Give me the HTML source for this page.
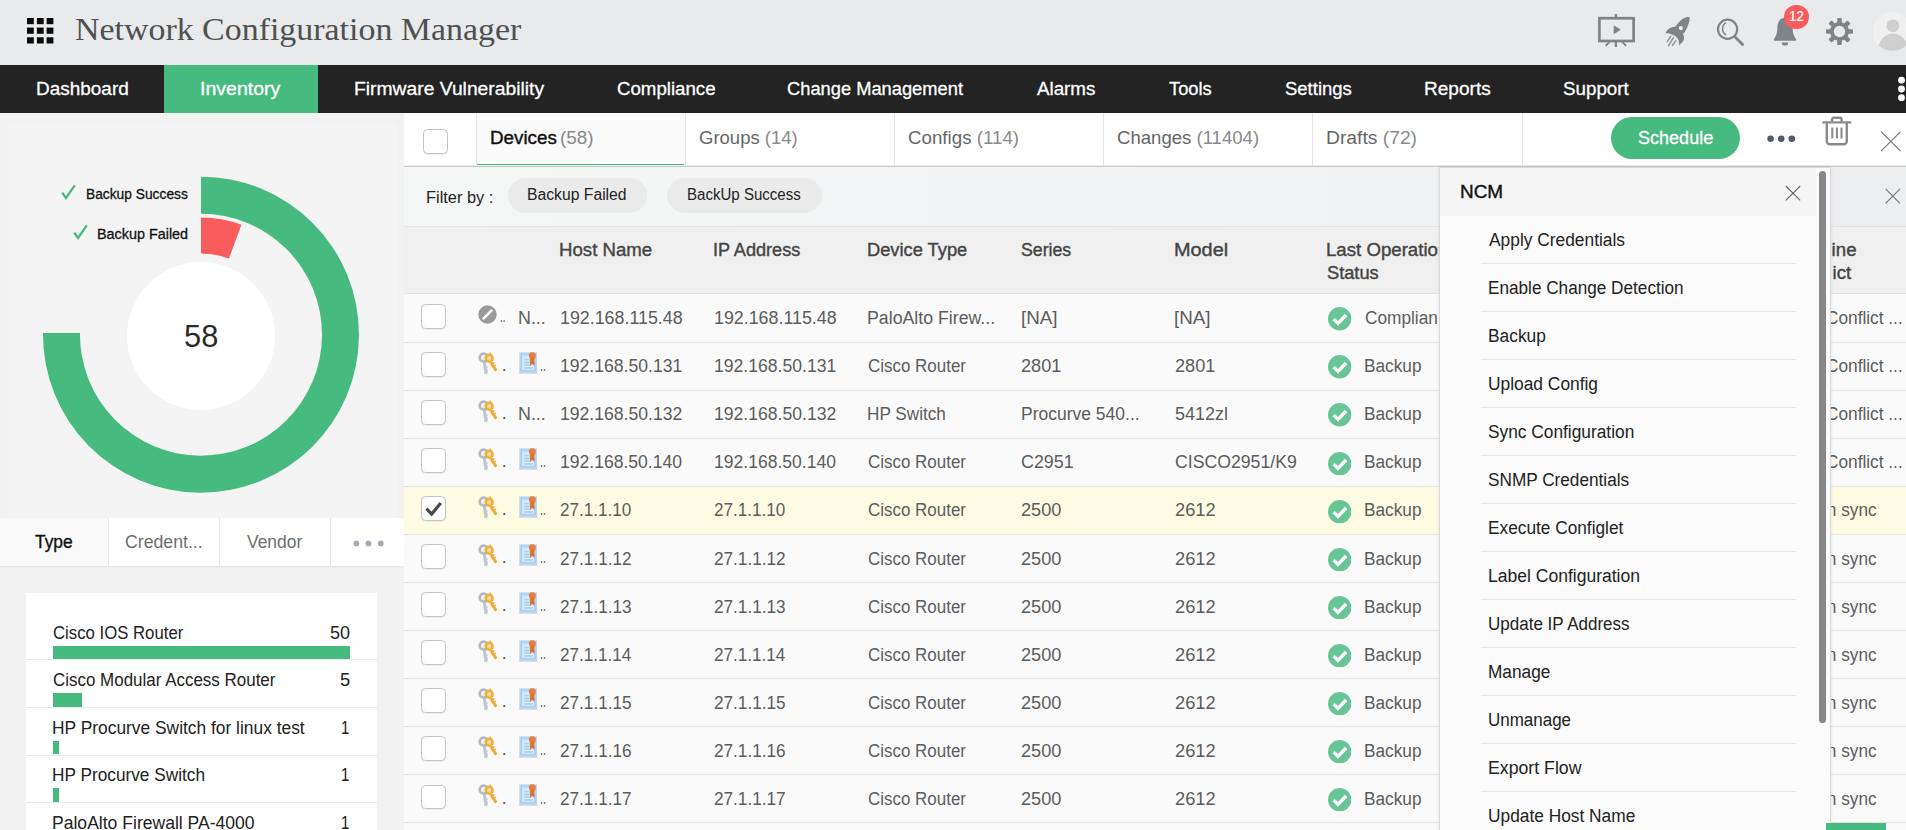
<!DOCTYPE html>
<html lang="en"><head><meta charset="utf-8"><title>Network Configuration Manager</title>
<style>
html,body{margin:0;padding:0}
body{width:1906px;height:830px;overflow:hidden;position:relative;background:#f2f2f2;font-family:"Liberation Sans",sans-serif}
.b{position:absolute;display:block}
.t{position:absolute;white-space:nowrap;line-height:1;transform-origin:0 0;display:block}
.row{position:absolute;left:404px;width:1502px;border-bottom:1px solid #e2e2e2}
.cb{position:absolute;width:22.8px;height:22.8px;border:1px solid #c4c4c4;border-radius:4.5px;background:#fff;box-shadow:0 1px 0 rgba(0,0,0,.06)}
.cb svg{position:absolute;left:-1px;top:-1px}
#pop{position:absolute;left:1439px;top:167px;width:392px;height:670px;background:#fbfbfb;border:1px solid #d9d9d9;box-shadow:0 0 3px rgba(0,0,0,.1);box-sizing:border-box;z-index:5}
#popin{position:absolute;left:-1440px;top:-168px;width:1906px;height:830px}
</style></head><body>
<svg width="0" height="0" style="position:absolute">
<defs>
<g id="iok"><circle cx="12" cy="12" r="12" fill="#68c696"/><path d="M5.8 12.4l4.4 4.4L18.6 8.2" fill="none" stroke="#fff" stroke-width="3.5"/></g>
<g id="ikey">
 <path d="M7.4 10.2L9.2 21.8" stroke="#c3c6ca" stroke-width="3.3" fill="none"/>
 <path d="M8.6 15.5h2.2M8.9 18.5h2" stroke="#c3c6ca" stroke-width="1.4"/>
 <circle cx="6.7" cy="5.5" r="4" fill="#eef0f2" stroke="#b3b7bc" stroke-width="2.5"/>
 <path d="M13.7 10.3L19.3 18.6" stroke="#efaa3a" stroke-width="3.1" fill="none"/>
 <path d="M16 11.6l1.6-1M17.6 14l1.5-1" stroke="#efaa3a" stroke-width="1.3"/>
 <circle cx="12.2" cy="6.3" r="3.4" fill="#fbe59a" stroke="#f0ae3e" stroke-width="2.6"/>
 <path d="M13 .6l1 2.4" stroke="#f0ae3e" stroke-width="1.6"/>
</g>
<g id="icert">
 <path d="M0 22l1.6-1.2h17l1.6 1.2z" fill="#dcdfe3"/>
 <rect x="1.3" y=".4" width="17.7" height="20.6" fill="#b7d6f3"/>
 <rect x="3.5" y="3" width="13.3" height="15.6" fill="#d3e8fa" stroke="#a2c6ea" stroke-width=".8"/>
 <path d="M6.4 7.8h5.4M6.4 10.4h5.4M6.4 13h5.4M6 16h9" stroke="#9dbfe2" stroke-width="1"/>
 <circle cx="14.3" cy="3.7" r="3.4" fill="#e8793a"/>
 <path d="M12.3 6.2l-.4 7.8 2.4-2.2 2.4 2.2-.4-7.8z" fill="#e16f2c"/>
</g>
</defs></svg>

<!-- ===== header ===== -->
<div class="b" style="left:0;top:0;width:1906px;height:65px;background:#e9eaeb"></div>
<svg class="b" style="left:26.6px;top:18px" width="27" height="26" viewBox="0 0 27 26" fill="#0a0a0a">
<rect x="0" y="0" width="6.8" height="6.2"/><rect x="9.9" y="0" width="6.8" height="6.2"/><rect x="19.6" y="0" width="6.8" height="6.2"/>
<rect x="0" y="9.6" width="6.8" height="6.2"/><rect x="9.9" y="9.6" width="6.8" height="6.2"/><rect x="19.6" y="9.6" width="6.8" height="6.2"/>
<rect x="0" y="19.3" width="6.8" height="6.2"/><rect x="9.9" y="19.3" width="6.8" height="6.2"/><rect x="19.6" y="19.3" width="6.8" height="6.2"/>
</svg>
<!-- presentation -->
<svg class="b" style="left:1596px;top:12px" width="42" height="38" viewBox="0 0 42 38">
<g fill="none" stroke="#7f8488" stroke-width="2.7"><rect x="3.4" y="6.2" width="34.2" height="22.8"/><path d="M19.9 2v4M19.9 29.4v5.6" stroke-width="2.3"/><path d="M13.4 29.8l-3.6 4M26.4 29.8l3.6 4" stroke-width="1.9"/></g>
<path d="M17.7 13.2v9l7.2-4.5z" fill="#7f8488"/>
</svg>
<!-- rocket -->
<svg class="b" style="left:1663px;top:15px" width="30" height="33" viewBox="0 0 30 33">
<path d="M26.4 2.05C26.8 4.5 26.4 6.5 25.8 8.1 25 10.8 24 13.2 22.8 15.3 22 16.6 21.1 17.8 20.07 18.9 20.9 20.5 21.2 22.1 20.98 23.7 20.7 25 20.1 26.2 19.2 27.3 18.3 28.4 17.3 29.4 16.2 30.4 16.2 28.7 16 27.1 15.55 25.5 15.2 24.4 14.6 23.4 13.7 22.5 12.6 21.5 11.4 20.7 10.1 20.1 8.6 19.4 7 18.8 5.3 18.3L2.3 18.3C2.9 17 3.7 15.8 4.7 14.7 5.7 13.7 6.9 13 8.3 12.6 9.7 12.2 11.1 11.9 12.5 11.7 13.3 10.2 14.3 8.8 15.55 7.5 16.8 6.2 18.2 5 19.8 3.86 20.9 3.2 22.1 2.7 23.4 2.35 24.4 2.1 25.4 2 26.4 2.05Z" fill="#7f8488"/>
<circle cx="17.8" cy="13.1" r="2.1" fill="#eeeff0"/>
<g stroke="#7f8488" stroke-width="1.5" stroke-linecap="round" opacity=".85"><path d="M7.7 21.4L4.3 26.6M10.3 22.8L5.6 30.6M12.8 25.6L9.6 30.2"/></g>
</svg>
<!-- search -->
<svg class="b" style="left:1714px;top:15px" width="34" height="34" viewBox="0 0 34 34" fill="none" stroke="#7f8488">
<circle cx="13.6" cy="14.2" r="9.6" stroke-width="2.2"/><path d="M12 7.6c-4.6 2.6-4.6 9.8 0 12.4" stroke-width="1.5"/><path d="M20.6 21.4l8 8" stroke-width="2.8" stroke-linecap="round"/>
</svg>
<!-- bell -->
<svg class="b" style="left:1772px;top:14px" width="28" height="34" viewBox="0 0 28 34" fill="#7f8488">
<path d="M13 3.5c-5 .6-7.6 4.4-7.6 9.6 0 6-1.4 9.4-3.4 12v1.7h22V25.1c-2-2.6-3.4-6-3.4-12 0-5.2-2.6-9-7.6-9.6z"/><path d="M9.8 28.4h6.4a3.2 3.2 0 0 1-6.4 0z"/>
</svg>
<div class="b" style="left:1784.1px;top:4.6px;width:24.6px;height:24.6px;border-radius:50%;background:#f85c5c"></div>
<!-- gear -->
<svg class="b" style="left:1825px;top:17px" width="29" height="29" viewBox="-14.5 -14.5 29 29">
<g fill="#7f8488"><circle r="9.5"/>
<g id="tooth"><rect x="-2.3" y="-13.5" width="4.6" height="27" rx="1.1"/></g>
<use href="#tooth" transform="rotate(45)"/><use href="#tooth" transform="rotate(90)"/><use href="#tooth" transform="rotate(135)"/></g>
<circle r="5.7" fill="#e9eaeb"/>
</svg>
<!-- avatar -->
<svg class="b" style="left:1872.5px;top:11.5px" width="34" height="39" viewBox="0 0 34 39"><defs><clipPath id="av"><circle cx="19.5" cy="19.5" r="19.5"/></clipPath></defs>
<circle cx="19.5" cy="19.5" r="19.5" fill="#f0f0f0"/><g clip-path="url(#av)" fill="#cfcfcf"><circle cx="19.9" cy="13.8" r="6.4"/><ellipse cx="20" cy="37.4" rx="14.5" ry="16"/></g></svg>

<!-- ===== nav ===== -->
<div class="b" style="left:0;top:65px;width:1906px;height:48px;background:#232323"></div>
<div class="b" style="left:164px;top:65px;width:154px;height:48px;background:#47ba7f"></div>
<svg class="b" style="left:1896px;top:75px" width="10" height="28" viewBox="0 0 10 28" fill="#fff"><circle cx="5.5" cy="5.2" r="3.4"/><circle cx="5.5" cy="14" r="3.4"/><circle cx="5.5" cy="22.7" r="3.4"/></svg>

<!-- ===== left panel ===== -->
<div class="b" style="left:9px;top:123px;width:389px;height:395px;background:#f4f4f4"></div>
<svg class="b" style="left:0;top:160px" width="404" height="350" viewBox="0 160 404 350">
<path d="M201 176.7A158 158 0 1 1 43.01 333.1H80.01A121 121 0 1 0 201 213.7Z" fill="#47ba7f"/>
<path d="M201 217.5A117.2 117.2 0 0 1 241.4 224.7L229 258.4A81.2 81.2 0 0 0 201 253.5Z" fill="#f85c5c"/>
<circle cx="201" cy="336" r="74" fill="#fff"/>
<g fill="none" stroke="#47ba7f" stroke-width="2.3"><path d="M62.2 192.6l3.8 5.4 8.8-12.6"/><path d="M74.2 232.6l3.8 5.4 8.8-12.6"/></g>
</svg>
<div class="b" style="left:0;top:518px;width:404px;height:48px;background:#fff;box-shadow:0 1px 2px rgba(0,0,0,.08)"></div>
<div class="b" style="left:0;top:518px;width:108px;height:48px;background:#f9f9f9"></div>
<div class="b" style="left:108px;top:518px;width:1px;height:48px;background:#e6e6e6"></div>
<div class="b" style="left:219px;top:518px;width:1px;height:48px;background:#e6e6e6"></div>
<div class="b" style="left:330px;top:518px;width:1px;height:48px;background:#e6e6e6"></div>
<svg class="b" style="left:350px;top:538px" width="36" height="12" viewBox="0 0 36 12" fill="#a4abb3"><circle cx="6.3" cy="5.4" r="2.9"/><circle cx="18.4" cy="5.4" r="2.9"/><circle cx="30.8" cy="5.4" r="2.9"/></svg>
<div class="b" style="left:26px;top:593px;width:351px;height:240px;background:#fff"></div>
<div class="b" style="left:53.3px;top:646.4px;width:296.6px;height:12.6px;background:#47ba7f"></div>
<div class="b" style="left:26px;top:659px;width:351px;height:1.3px;background:#e9e9e9"></div>
<div class="b" style="left:53.3px;top:693.4px;width:28.6px;height:13.2px;background:#47ba7f"></div>
<div class="b" style="left:26px;top:707px;width:351px;height:1.3px;background:#e9e9e9"></div>
<div class="b" style="left:53.3px;top:741px;width:5.8px;height:13.2px;background:#47ba7f"></div>
<div class="b" style="left:26px;top:755px;width:351px;height:1.3px;background:#e9e9e9"></div>
<div class="b" style="left:53.3px;top:788.2px;width:5.8px;height:13.4px;background:#47ba7f"></div>
<div class="b" style="left:26px;top:802px;width:351px;height:1.3px;background:#e9e9e9"></div>

<!-- ===== main: tab bar ===== -->
<div class="b" style="left:404px;top:113px;width:1502px;height:717px;background:#fafafa"></div>
<div class="b" style="left:404px;top:113px;width:1502px;height:52.5px;background:#fff"></div>
<div class="b" style="left:476px;top:113px;width:209px;height:52px;background:#fafafa"></div>
<div class="b" style="left:404px;top:165px;width:1502px;height:1px;background:#ececec"></div><div class="b" style="left:404px;top:166px;width:1502px;height:1px;background:#c9c9c9"></div>
<div class="b" style="left:477px;top:163.6px;width:207px;height:1.6px;background:#47ba7f"></div>
<div class="b" style="left:475.5px;top:113px;width:1px;height:52px;background:#e4e4e4"></div>
<div class="b" style="left:685px;top:113px;width:1px;height:52px;background:#e4e4e4"></div>
<div class="b" style="left:894px;top:113px;width:1px;height:52px;background:#e4e4e4"></div>
<div class="b" style="left:1103px;top:113px;width:1px;height:52px;background:#e4e4e4"></div>
<div class="b" style="left:1312px;top:113px;width:1px;height:52px;background:#e4e4e4"></div>
<div class="b" style="left:1522px;top:113px;width:1px;height:52px;background:#e4e4e4"></div>
<div class="cb" style="left:423.1px;top:128.9px"></div>
<div class="b" style="left:1611.2px;top:117px;width:128.4px;height:41.6px;border-radius:21px;background:#47ba7f"></div>
<svg class="b" style="left:1765px;top:133px" width="34" height="12" viewBox="0 0 34 12" fill="#4f5b6b"><circle cx="5.6" cy="5.8" r="3.3"/><circle cx="16.2" cy="5.8" r="3.3"/><circle cx="26.8" cy="5.8" r="3.3"/></svg>
<!-- trash -->
<svg class="b" style="left:1821px;top:115px" width="32" height="32" viewBox="0 0 32 32" fill="none" stroke="#8c8c8c" stroke-width="2.4">
<path d="M2.4 7.4h26.8" stroke-linecap="round"/><path d="M11 7V4.6c0-1 .8-1.8 1.8-1.8h6c1 0 1.8.8 1.8 1.8V7"/><path d="M5.8 7.6v18.6a3 3 0 0 0 3 3h14a3 3 0 0 0 3-3V7.6"/><path d="M11.3 12.6v11M15.9 12.6v11M20.5 12.6v11" stroke-width="2.1"/>
</svg>
<svg class="b" style="left:1879px;top:130px" width="24" height="24" viewBox="0 0 24 24" stroke="#777" stroke-width="1.2"><path d="M2 1.6l19.6 19.6M21.6 1.6L2 21.2"/></svg>

<!-- ===== filter bar ===== -->
<div class="b" style="left:404px;top:167px;width:1502px;height:59px;background:linear-gradient(90deg,#f5f6f6 0%,#f3f4f5 45%,#edeef0 100%)"></div>
<div class="b" style="left:404px;top:226px;width:1502px;height:1px;background:#e4e4e4"></div>
<div class="b" style="left:508px;top:178.2px;width:138.6px;height:34.6px;border-radius:18px;background:#ebebeb"></div>
<div class="b" style="left:667px;top:178.2px;width:154.8px;height:34.6px;border-radius:18px;background:#ebebeb"></div>
<svg class="b" style="left:1884px;top:187px" width="18" height="18" viewBox="0 0 18 18" stroke="#777" stroke-width="1.1"><path d="M1.6 1.8l14.4 14.6M16 1.8L1.6 16.4"/></svg>

<!-- ===== table header ===== -->
<div class="b" style="left:404px;top:227px;width:1502px;height:66px;background:#f0f0f0"></div>
<div class="b" style="left:404px;top:293px;width:1502px;height:1px;background:#e2e2e2"></div>
<div class="row" style="top:294px;height:48px;background:#fafafa"></div>
<div class="cb" style="left:420.8px;top:303.8px"></div>
<svg class="b" style="left:478px;top:305.2px" width="19" height="19" viewBox="0 0 19 19"><circle cx="9.5" cy="9.5" r="9.2" fill="#9a9a9a"/><path d="M5.6 13.4L13.4 5.6" stroke="#fff" stroke-width="2.6" stroke-linecap="round"/></svg>
<span class="t" style="left:499.5px;top:307.8px;font-size:17.6px;color:#555;transform:scaleX(.55)">..</span>
<svg class="b" style="left:1327.7px;top:307.3px" width="23.4" height="23.4" viewBox="0 0 24 24"><use href="#iok"/></svg>
<div class="row" style="top:343px;height:47px;background:#fafafa"></div>
<div class="cb" style="left:420.8px;top:351.9px"></div>
<svg class="b" style="left:477px;top:351.8px" width="22" height="24" viewBox="0 0 22 24"><use href="#ikey"/></svg>
<span class="t" style="left:501.8px;top:356.9px;font-size:17.6px;color:#555">.</span>
<svg class="b" style="left:518px;top:351.8px" width="22" height="24" viewBox="0 0 22 24"><use href="#icert"/></svg>
<span class="t" style="left:540px;top:356.9px;font-size:17.6px;color:#555;transform:scaleX(.6)">..</span>
<svg class="b" style="left:1327.7px;top:355.4px" width="23.4" height="23.4" viewBox="0 0 24 24"><use href="#iok"/></svg>
<div class="row" style="top:391px;height:47px;background:#fafafa"></div>
<div class="cb" style="left:420.8px;top:399.9px"></div>
<svg class="b" style="left:477px;top:399.8px" width="22" height="24" viewBox="0 0 22 24"><use href="#ikey"/></svg>
<span class="t" style="left:501.8px;top:404.9px;font-size:17.6px;color:#555">.</span>
<svg class="b" style="left:1327.7px;top:403.4px" width="23.4" height="23.4" viewBox="0 0 24 24"><use href="#iok"/></svg>
<div class="row" style="top:439px;height:47px;background:#fafafa"></div>
<div class="cb" style="left:420.8px;top:448.0px"></div>
<svg class="b" style="left:477px;top:447.9px" width="22" height="24" viewBox="0 0 22 24"><use href="#ikey"/></svg>
<span class="t" style="left:501.8px;top:453.0px;font-size:17.6px;color:#555">.</span>
<svg class="b" style="left:518px;top:447.9px" width="22" height="24" viewBox="0 0 22 24"><use href="#icert"/></svg>
<span class="t" style="left:540px;top:453.0px;font-size:17.6px;color:#555;transform:scaleX(.6)">..</span>
<svg class="b" style="left:1327.7px;top:451.5px" width="23.4" height="23.4" viewBox="0 0 24 24"><use href="#iok"/></svg>
<div class="row" style="top:487px;height:47px;background:#fdfce3"></div>
<div class="cb" style="left:420.8px;top:496.1px"><svg width="25" height="25" viewBox="0 0 25 25"><path d="M5.4 12.6l5.2 5.4L19.8 7" fill="none" stroke="#4a4a4a" stroke-width="3.2"/></svg></div>
<svg class="b" style="left:477px;top:496.0px" width="22" height="24" viewBox="0 0 22 24"><use href="#ikey"/></svg>
<span class="t" style="left:501.8px;top:501.1px;font-size:17.6px;color:#555">.</span>
<svg class="b" style="left:518px;top:496.0px" width="22" height="24" viewBox="0 0 22 24"><use href="#icert"/></svg>
<span class="t" style="left:540px;top:501.1px;font-size:17.6px;color:#555;transform:scaleX(.6)">..</span>
<svg class="b" style="left:1327.7px;top:499.6px" width="23.4" height="23.4" viewBox="0 0 24 24"><use href="#iok"/></svg>
<div class="row" style="top:535px;height:47px;background:#fafafa"></div>
<div class="cb" style="left:420.8px;top:544.2px"></div>
<svg class="b" style="left:477px;top:544.1px" width="22" height="24" viewBox="0 0 22 24"><use href="#ikey"/></svg>
<span class="t" style="left:501.8px;top:549.2px;font-size:17.6px;color:#555">.</span>
<svg class="b" style="left:518px;top:544.1px" width="22" height="24" viewBox="0 0 22 24"><use href="#icert"/></svg>
<span class="t" style="left:540px;top:549.2px;font-size:17.6px;color:#555;transform:scaleX(.6)">..</span>
<svg class="b" style="left:1327.7px;top:547.7px" width="23.4" height="23.4" viewBox="0 0 24 24"><use href="#iok"/></svg>
<div class="row" style="top:583px;height:47px;background:#fafafa"></div>
<div class="cb" style="left:420.8px;top:592.2px"></div>
<svg class="b" style="left:477px;top:592.1px" width="22" height="24" viewBox="0 0 22 24"><use href="#ikey"/></svg>
<span class="t" style="left:501.8px;top:597.2px;font-size:17.6px;color:#555">.</span>
<svg class="b" style="left:518px;top:592.1px" width="22" height="24" viewBox="0 0 22 24"><use href="#icert"/></svg>
<span class="t" style="left:540px;top:597.2px;font-size:17.6px;color:#555;transform:scaleX(.6)">..</span>
<svg class="b" style="left:1327.7px;top:595.7px" width="23.4" height="23.4" viewBox="0 0 24 24"><use href="#iok"/></svg>
<div class="row" style="top:631px;height:47px;background:#fafafa"></div>
<div class="cb" style="left:420.8px;top:640.3px"></div>
<svg class="b" style="left:477px;top:640.2px" width="22" height="24" viewBox="0 0 22 24"><use href="#ikey"/></svg>
<span class="t" style="left:501.8px;top:645.3px;font-size:17.6px;color:#555">.</span>
<svg class="b" style="left:518px;top:640.2px" width="22" height="24" viewBox="0 0 22 24"><use href="#icert"/></svg>
<span class="t" style="left:540px;top:645.3px;font-size:17.6px;color:#555;transform:scaleX(.6)">..</span>
<svg class="b" style="left:1327.7px;top:643.8px" width="23.4" height="23.4" viewBox="0 0 24 24"><use href="#iok"/></svg>
<div class="row" style="top:679px;height:47px;background:#fafafa"></div>
<div class="cb" style="left:420.8px;top:688.4px"></div>
<svg class="b" style="left:477px;top:688.3px" width="22" height="24" viewBox="0 0 22 24"><use href="#ikey"/></svg>
<span class="t" style="left:501.8px;top:693.4px;font-size:17.6px;color:#555">.</span>
<svg class="b" style="left:518px;top:688.3px" width="22" height="24" viewBox="0 0 22 24"><use href="#icert"/></svg>
<span class="t" style="left:540px;top:693.4px;font-size:17.6px;color:#555;transform:scaleX(.6)">..</span>
<svg class="b" style="left:1327.7px;top:691.9px" width="23.4" height="23.4" viewBox="0 0 24 24"><use href="#iok"/></svg>
<div class="row" style="top:727px;height:47px;background:#fafafa"></div>
<div class="cb" style="left:420.8px;top:736.4px"></div>
<svg class="b" style="left:477px;top:736.3px" width="22" height="24" viewBox="0 0 22 24"><use href="#ikey"/></svg>
<span class="t" style="left:501.8px;top:741.4px;font-size:17.6px;color:#555">.</span>
<svg class="b" style="left:518px;top:736.3px" width="22" height="24" viewBox="0 0 22 24"><use href="#icert"/></svg>
<span class="t" style="left:540px;top:741.4px;font-size:17.6px;color:#555;transform:scaleX(.6)">..</span>
<svg class="b" style="left:1327.7px;top:739.9px" width="23.4" height="23.4" viewBox="0 0 24 24"><use href="#iok"/></svg>
<div class="row" style="top:775px;height:47px;background:#fafafa"></div>
<div class="cb" style="left:420.8px;top:784.5px"></div>
<svg class="b" style="left:477px;top:784.4px" width="22" height="24" viewBox="0 0 22 24"><use href="#ikey"/></svg>
<span class="t" style="left:501.8px;top:789.5px;font-size:17.6px;color:#555">.</span>
<svg class="b" style="left:518px;top:784.4px" width="22" height="24" viewBox="0 0 22 24"><use href="#icert"/></svg>
<span class="t" style="left:540px;top:789.5px;font-size:17.6px;color:#555;transform:scaleX(.6)">..</span>
<svg class="b" style="left:1327.7px;top:788.0px" width="23.4" height="23.4" viewBox="0 0 24 24"><use href="#iok"/></svg>
<div class="b" style="left:1826px;top:823px;width:60px;height:10px;background:#47ba7f;z-index:6"></div>

<span class="t" style="left:74.57px;top:14.00px;font-size:31.6px;color:#505050;transform:scaleX(1.0732);font-family:'Liberation Serif',serif;">Network Configuration Manager</span>
<span class="t" style="left:35.62px;top:79.00px;font-size:19.2px;color:#fff;transform:scaleX(0.9885);-webkit-text-stroke:0.3px currentColor;">Dashboard</span>
<span class="t" style="left:200.07px;top:79.00px;font-size:19.2px;color:#fff;transform:scaleX(1.0184);-webkit-text-stroke:0.3px currentColor;">Inventory</span>
<span class="t" style="left:353.59px;top:79.00px;font-size:19.2px;color:#fff;transform:scaleX(1.0053);-webkit-text-stroke:0.3px currentColor;">Firmware Vulnerability</span>
<span class="t" style="left:616.72px;top:79.00px;font-size:19.2px;color:#fff;transform:scaleX(0.9729);-webkit-text-stroke:0.3px currentColor;">Compliance</span>
<span class="t" style="left:787.34px;top:79.00px;font-size:19.2px;color:#fff;transform:scaleX(0.9536);-webkit-text-stroke:0.3px currentColor;">Change Management</span>
<span class="t" style="left:1037.30px;top:79.00px;font-size:19.2px;color:#fff;transform:scaleX(0.9774);-webkit-text-stroke:0.3px currentColor;">Alarms</span>
<span class="t" style="left:1168.71px;top:79.00px;font-size:19.2px;color:#fff;transform:scaleX(0.9540);-webkit-text-stroke:0.3px currentColor;">Tools</span>
<span class="t" style="left:1284.62px;top:79.00px;font-size:19.2px;color:#fff;transform:scaleX(0.9637);-webkit-text-stroke:0.3px currentColor;">Settings</span>
<span class="t" style="left:1423.81px;top:79.00px;font-size:19.2px;color:#fff;transform:scaleX(0.9934);-webkit-text-stroke:0.3px currentColor;">Reports</span>
<span class="t" style="left:1563.11px;top:79.00px;font-size:19.2px;color:#fff;transform:scaleX(0.9788);-webkit-text-stroke:0.3px currentColor;">Support</span>
<span class="t" style="left:1789.21px;top:9.00px;font-size:14.3px;color:#fff;transform:scaleX(0.9335);-webkit-text-stroke:0.2px currentColor;">12</span>
<span class="t" style="left:85.88px;top:186.00px;font-size:15.4px;color:#111;transform:scaleX(0.8949);-webkit-text-stroke:0.3px currentColor;">Backup Success</span>
<span class="t" style="left:97.03px;top:226.00px;font-size:15.4px;color:#111;transform:scaleX(0.9340);-webkit-text-stroke:0.3px currentColor;">Backup Failed</span>
<span class="t" style="left:184.44px;top:321.00px;font-size:31.6px;color:#2b2b2b;transform:scaleX(0.9763);">58</span>
<span class="t" style="left:34.83px;top:533.00px;font-size:18.2px;color:#111;transform:scaleX(0.9549);-webkit-text-stroke:0.35px currentColor;">Type</span>
<span class="t" style="left:125.27px;top:533.00px;font-size:18.2px;color:#6e6e6e;transform:scaleX(0.9726);">Credent...</span>
<span class="t" style="left:246.90px;top:533.00px;font-size:18.2px;color:#6e6e6e;transform:scaleX(0.9584);">Vendor</span>
<span class="t" style="left:53.02px;top:624.00px;font-size:18px;color:#222;transform:scaleX(0.9302);">Cisco IOS Router</span>
<span class="t" style="left:329.94px;top:624.00px;font-size:18px;color:#222;transform:scaleX(0.9994);">50</span>
<span class="t" style="left:53.01px;top:671.00px;font-size:18px;color:#222;transform:scaleX(0.9422);">Cisco Modular Access Router</span>
<span class="t" style="left:340.03px;top:671.00px;font-size:18px;color:#222;transform:scaleX(1.0208);">5</span>
<span class="t" style="left:52.44px;top:719.00px;font-size:18px;color:#222;transform:scaleX(0.9653);">HP Procurve Switch for linux test</span>
<span class="t" style="left:341.16px;top:719.00px;font-size:18px;color:#222;transform:scaleX(0.8337);">1</span>
<span class="t" style="left:52.45px;top:766.00px;font-size:18px;color:#222;transform:scaleX(0.9579);">HP Procurve Switch</span>
<span class="t" style="left:341.16px;top:766.00px;font-size:18px;color:#222;transform:scaleX(0.8337);">1</span>
<span class="t" style="left:52.43px;top:814.00px;font-size:18px;color:#222;transform:scaleX(0.9752);">PaloAlto Firewall PA-4000</span>
<span class="t" style="left:341.16px;top:814.00px;font-size:18px;color:#222;transform:scaleX(0.8337);">1</span>
<span class="t" style="left:489.53px;top:129.00px;font-size:18.8px;color:#111;transform:scaleX(1.0014);-webkit-text-stroke:0.4px currentColor;">Devices</span>
<span class="t" style="left:560.41px;top:129.00px;font-size:18.8px;color:#888;transform:scaleX(1.0071);">(58)</span>
<span class="t" style="left:698.73px;top:129.00px;font-size:18.8px;color:#666;transform:scaleX(0.9853);">Groups <span style="color:#8a8a8a">(14)</span></span>
<span class="t" style="left:908.12px;top:129.00px;font-size:18.8px;color:#666;transform:scaleX(0.9972);">Configs <span style="color:#8a8a8a">(114)</span></span>
<span class="t" style="left:1117.23px;top:129.00px;font-size:18.8px;color:#666;transform:scaleX(0.9886);">Changes <span style="color:#8a8a8a">(11404)</span></span>
<span class="t" style="left:1325.89px;top:129.00px;font-size:18.8px;color:#666;transform:scaleX(1.0261);">Drafts <span style="color:#8a8a8a">(72)</span></span>
<span class="t" style="left:1637.74px;top:128.00px;font-size:19px;color:#fff;transform:scaleX(0.9491);-webkit-text-stroke:0.3px currentColor;">Schedule</span>
<span class="t" style="left:426.20px;top:190.00px;font-size:15.8px;color:#222;transform:scaleX(1.0365);">Filter by :</span>
<span class="t" style="left:527.26px;top:187.00px;font-size:15.8px;color:#222;transform:scaleX(0.9949);">Backup Failed</span>
<span class="t" style="left:687.31px;top:187.00px;font-size:15.8px;color:#222;transform:scaleX(0.9528);">BackUp Success</span>
<span class="t" style="left:559.04px;top:241.00px;font-size:18.8px;color:#444;transform:scaleX(0.9924);-webkit-text-stroke:0.4px currentColor;">Host Name</span>
<span class="t" style="left:713.08px;top:241.00px;font-size:18.8px;color:#444;transform:scaleX(0.9645);-webkit-text-stroke:0.4px currentColor;">IP Address</span>
<span class="t" style="left:866.97px;top:241.00px;font-size:18.8px;color:#444;transform:scaleX(0.9732);-webkit-text-stroke:0.4px currentColor;">Device Type</span>
<span class="t" style="left:1021.45px;top:241.00px;font-size:18.8px;color:#444;transform:scaleX(0.9422);-webkit-text-stroke:0.4px currentColor;">Series</span>
<span class="t" style="left:1173.75px;top:241.00px;font-size:18.8px;color:#444;transform:scaleX(1.0578);-webkit-text-stroke:0.4px currentColor;">Model</span>
<span class="t" style="left:1326.04px;top:241.00px;font-size:18.8px;color:#444;transform:scaleX(0.9924);-webkit-text-stroke:0.4px currentColor;">Last Operation</span>
<span class="t" style="left:1327.43px;top:264.00px;font-size:18.8px;color:#444;transform:scaleX(0.9708);-webkit-text-stroke:0.4px currentColor;">Status</span>
<span class="t" style="left:517.90px;top:310.00px;font-size:17.6px;color:#5c5c5c;transform:scaleX(1.0158);">N...</span>
<span class="t" style="left:559.89px;top:310.00px;font-size:17.6px;color:#5c5c5c;transform:scaleX(1.0132);">192.168.115.48</span>
<span class="t" style="left:713.69px;top:310.00px;font-size:17.6px;color:#5c5c5c;transform:scaleX(1.0132);">192.168.115.48</span>
<span class="t" style="left:867.11px;top:310.00px;font-size:17.6px;color:#5c5c5c;transform:scaleX(1.0081);">PaloAlto Firew...</span>
<span class="t" style="left:1021.12px;top:310.00px;font-size:17.6px;color:#5c5c5c;transform:scaleX(1.0689);">[NA]</span>
<span class="t" style="left:1174.32px;top:310.00px;font-size:17.6px;color:#5c5c5c;transform:scaleX(1.0689);">[NA]</span>
<span class="t" style="left:1364.59px;top:310.00px;font-size:17.6px;color:#5c5c5c;transform:scaleX(0.9803);">Complian...</span>
<span class="t" style="left:1825.85px;top:310.00px;font-size:17.6px;color:#5c5c5c;transform:scaleX(0.9803);">Conflict ...</span>
<span class="t" style="left:559.90px;top:358.00px;font-size:17.6px;color:#5c5c5c;transform:scaleX(0.9998);">192.168.50.131</span>
<span class="t" style="left:713.70px;top:358.00px;font-size:17.6px;color:#5c5c5c;transform:scaleX(0.9998);">192.168.50.131</span>
<span class="t" style="left:867.71px;top:358.00px;font-size:17.6px;color:#5c5c5c;transform:scaleX(0.9632);">Cisco Router</span>
<span class="t" style="left:1021.45px;top:358.00px;font-size:17.6px;color:#5c5c5c;transform:scaleX(1.0315);">2801</span>
<span class="t" style="left:1174.65px;top:358.00px;font-size:17.6px;color:#5c5c5c;transform:scaleX(1.0315);">2801</span>
<span class="t" style="left:1363.95px;top:358.00px;font-size:17.6px;color:#5c5c5c;transform:scaleX(0.9803);">Backup</span>
<span class="t" style="left:1825.85px;top:358.00px;font-size:17.6px;color:#5c5c5c;transform:scaleX(0.9803);">Conflict ...</span>
<span class="t" style="left:517.90px;top:406.00px;font-size:17.6px;color:#5c5c5c;transform:scaleX(1.0158);">N...</span>
<span class="t" style="left:559.90px;top:406.00px;font-size:17.6px;color:#5c5c5c;transform:scaleX(0.9998);">192.168.50.132</span>
<span class="t" style="left:713.70px;top:406.00px;font-size:17.6px;color:#5c5c5c;transform:scaleX(0.9998);">192.168.50.132</span>
<span class="t" style="left:867.16px;top:406.00px;font-size:17.6px;color:#5c5c5c;transform:scaleX(0.9757);">HP Switch</span>
<span class="t" style="left:1020.93px;top:406.00px;font-size:17.6px;color:#5c5c5c;transform:scaleX(0.9941);">Procurve 540...</span>
<span class="t" style="left:1174.94px;top:406.00px;font-size:17.6px;color:#5c5c5c;transform:scaleX(1.0209);">5412zl</span>
<span class="t" style="left:1363.95px;top:406.00px;font-size:17.6px;color:#5c5c5c;transform:scaleX(0.9803);">Backup</span>
<span class="t" style="left:1825.85px;top:406.00px;font-size:17.6px;color:#5c5c5c;transform:scaleX(0.9803);">Conflict ...</span>
<span class="t" style="left:559.90px;top:454.00px;font-size:17.6px;color:#5c5c5c;transform:scaleX(0.9975);">192.168.50.140</span>
<span class="t" style="left:713.70px;top:454.00px;font-size:17.6px;color:#5c5c5c;transform:scaleX(0.9975);">192.168.50.140</span>
<span class="t" style="left:867.71px;top:454.00px;font-size:17.6px;color:#5c5c5c;transform:scaleX(0.9632);">Cisco Router</span>
<span class="t" style="left:1021.46px;top:454.00px;font-size:17.6px;color:#5c5c5c;transform:scaleX(1.0154);">C2951</span>
<span class="t" style="left:1174.67px;top:454.00px;font-size:17.6px;color:#5c5c5c;transform:scaleX(1.0044);">CISCO2951/K9</span>
<span class="t" style="left:1363.95px;top:454.00px;font-size:17.6px;color:#5c5c5c;transform:scaleX(0.9803);">Backup</span>
<span class="t" style="left:1825.85px;top:454.00px;font-size:17.6px;color:#5c5c5c;transform:scaleX(0.9803);">Conflict ...</span>
<span class="t" style="left:560.20px;top:502.00px;font-size:17.6px;color:#5c5c5c;transform:scaleX(0.9718);">27.1.1.10</span>
<span class="t" style="left:714.00px;top:502.00px;font-size:17.6px;color:#5c5c5c;transform:scaleX(0.9718);">27.1.1.10</span>
<span class="t" style="left:867.71px;top:502.00px;font-size:17.6px;color:#5c5c5c;transform:scaleX(0.9632);">Cisco Router</span>
<span class="t" style="left:1021.45px;top:502.00px;font-size:17.6px;color:#5c5c5c;transform:scaleX(1.0319);">2500</span>
<span class="t" style="left:1174.64px;top:502.00px;font-size:17.6px;color:#5c5c5c;transform:scaleX(1.0395);">2612</span>
<span class="t" style="left:1363.95px;top:502.00px;font-size:17.6px;color:#5c5c5c;transform:scaleX(0.9803);">Backup</span>
<span class="t" style="left:1821.61px;top:502.00px;font-size:17.6px;color:#5c5c5c;transform:scaleX(0.9803);">In sync</span>
<span class="t" style="left:560.20px;top:551.00px;font-size:17.6px;color:#5c5c5c;transform:scaleX(0.9755);">27.1.1.12</span>
<span class="t" style="left:714.00px;top:551.00px;font-size:17.6px;color:#5c5c5c;transform:scaleX(0.9755);">27.1.1.12</span>
<span class="t" style="left:867.71px;top:551.00px;font-size:17.6px;color:#5c5c5c;transform:scaleX(0.9632);">Cisco Router</span>
<span class="t" style="left:1021.45px;top:551.00px;font-size:17.6px;color:#5c5c5c;transform:scaleX(1.0319);">2500</span>
<span class="t" style="left:1174.64px;top:551.00px;font-size:17.6px;color:#5c5c5c;transform:scaleX(1.0395);">2612</span>
<span class="t" style="left:1363.95px;top:551.00px;font-size:17.6px;color:#5c5c5c;transform:scaleX(0.9803);">Backup</span>
<span class="t" style="left:1821.61px;top:551.00px;font-size:17.6px;color:#5c5c5c;transform:scaleX(0.9803);">In sync</span>
<span class="t" style="left:560.20px;top:599.00px;font-size:17.6px;color:#5c5c5c;transform:scaleX(0.9755);">27.1.1.13</span>
<span class="t" style="left:714.00px;top:599.00px;font-size:17.6px;color:#5c5c5c;transform:scaleX(0.9755);">27.1.1.13</span>
<span class="t" style="left:867.71px;top:599.00px;font-size:17.6px;color:#5c5c5c;transform:scaleX(0.9632);">Cisco Router</span>
<span class="t" style="left:1021.45px;top:599.00px;font-size:17.6px;color:#5c5c5c;transform:scaleX(1.0319);">2500</span>
<span class="t" style="left:1174.64px;top:599.00px;font-size:17.6px;color:#5c5c5c;transform:scaleX(1.0395);">2612</span>
<span class="t" style="left:1363.95px;top:599.00px;font-size:17.6px;color:#5c5c5c;transform:scaleX(0.9803);">Backup</span>
<span class="t" style="left:1821.61px;top:599.00px;font-size:17.6px;color:#5c5c5c;transform:scaleX(0.9803);">In sync</span>
<span class="t" style="left:560.20px;top:647.00px;font-size:17.6px;color:#5c5c5c;transform:scaleX(0.9718);">27.1.1.14</span>
<span class="t" style="left:714.00px;top:647.00px;font-size:17.6px;color:#5c5c5c;transform:scaleX(0.9718);">27.1.1.14</span>
<span class="t" style="left:867.71px;top:647.00px;font-size:17.6px;color:#5c5c5c;transform:scaleX(0.9632);">Cisco Router</span>
<span class="t" style="left:1021.45px;top:647.00px;font-size:17.6px;color:#5c5c5c;transform:scaleX(1.0319);">2500</span>
<span class="t" style="left:1174.64px;top:647.00px;font-size:17.6px;color:#5c5c5c;transform:scaleX(1.0395);">2612</span>
<span class="t" style="left:1363.95px;top:647.00px;font-size:17.6px;color:#5c5c5c;transform:scaleX(0.9803);">Backup</span>
<span class="t" style="left:1821.61px;top:647.00px;font-size:17.6px;color:#5c5c5c;transform:scaleX(0.9803);">In sync</span>
<span class="t" style="left:560.20px;top:695.00px;font-size:17.6px;color:#5c5c5c;transform:scaleX(0.9755);">27.1.1.15</span>
<span class="t" style="left:714.00px;top:695.00px;font-size:17.6px;color:#5c5c5c;transform:scaleX(0.9755);">27.1.1.15</span>
<span class="t" style="left:867.71px;top:695.00px;font-size:17.6px;color:#5c5c5c;transform:scaleX(0.9632);">Cisco Router</span>
<span class="t" style="left:1021.45px;top:695.00px;font-size:17.6px;color:#5c5c5c;transform:scaleX(1.0319);">2500</span>
<span class="t" style="left:1174.64px;top:695.00px;font-size:17.6px;color:#5c5c5c;transform:scaleX(1.0395);">2612</span>
<span class="t" style="left:1363.95px;top:695.00px;font-size:17.6px;color:#5c5c5c;transform:scaleX(0.9803);">Backup</span>
<span class="t" style="left:1821.61px;top:695.00px;font-size:17.6px;color:#5c5c5c;transform:scaleX(0.9803);">In sync</span>
<span class="t" style="left:560.20px;top:743.00px;font-size:17.6px;color:#5c5c5c;transform:scaleX(0.9755);">27.1.1.16</span>
<span class="t" style="left:714.00px;top:743.00px;font-size:17.6px;color:#5c5c5c;transform:scaleX(0.9755);">27.1.1.16</span>
<span class="t" style="left:867.71px;top:743.00px;font-size:17.6px;color:#5c5c5c;transform:scaleX(0.9632);">Cisco Router</span>
<span class="t" style="left:1021.45px;top:743.00px;font-size:17.6px;color:#5c5c5c;transform:scaleX(1.0319);">2500</span>
<span class="t" style="left:1174.64px;top:743.00px;font-size:17.6px;color:#5c5c5c;transform:scaleX(1.0395);">2612</span>
<span class="t" style="left:1363.95px;top:743.00px;font-size:17.6px;color:#5c5c5c;transform:scaleX(0.9803);">Backup</span>
<span class="t" style="left:1821.61px;top:743.00px;font-size:17.6px;color:#5c5c5c;transform:scaleX(0.9803);">In sync</span>
<span class="t" style="left:560.20px;top:791.00px;font-size:17.6px;color:#5c5c5c;transform:scaleX(0.9755);">27.1.1.17</span>
<span class="t" style="left:714.00px;top:791.00px;font-size:17.6px;color:#5c5c5c;transform:scaleX(0.9755);">27.1.1.17</span>
<span class="t" style="left:867.71px;top:791.00px;font-size:17.6px;color:#5c5c5c;transform:scaleX(0.9632);">Cisco Router</span>
<span class="t" style="left:1021.45px;top:791.00px;font-size:17.6px;color:#5c5c5c;transform:scaleX(1.0319);">2500</span>
<span class="t" style="left:1174.64px;top:791.00px;font-size:17.6px;color:#5c5c5c;transform:scaleX(1.0395);">2612</span>
<span class="t" style="left:1363.95px;top:791.00px;font-size:17.6px;color:#5c5c5c;transform:scaleX(0.9803);">Backup</span>
<span class="t" style="left:1821.61px;top:791.00px;font-size:17.6px;color:#5c5c5c;transform:scaleX(0.9803);">In sync</span>
<div class="b" style="left:1832px;top:0;width:74px;height:830px;overflow:hidden"><span class="t" style="left:-47.31px;top:241.00px;font-size:18.8px;color:#444;transform:scaleX(0.9924);-webkit-text-stroke:0.4px currentColor;">Baseline</span><span class="t" style="left:-43.08px;top:264.00px;font-size:18.8px;color:#444;transform:scaleX(0.9924);-webkit-text-stroke:0.4px currentColor;">Conflict</span></div>

<!-- ===== popup ===== -->
<div id="pop"><div id="popin">
<div class="b" style="left:1440px;top:168px;width:376px;height:48px;background:#f5f5f5"></div>
<div class="b" style="left:1819px;top:171px;width:7px;height:552px;border-radius:3.5px;background:#888"></div>
<svg class="b" style="left:1784px;top:184px" width="18" height="18" viewBox="0 0 18 18" stroke="#666" stroke-width="1.1"><path d="M1.8 2l14.4 14.4M16.2 2L1.8 16.4"/></svg>
<div class="b" style="left:1481px;top:263.1px;width:315px;height:1.2px;background:#e6e6e6"></div>
<div class="b" style="left:1481px;top:311.1px;width:315px;height:1.2px;background:#e6e6e6"></div>
<div class="b" style="left:1481px;top:359.0px;width:315px;height:1.2px;background:#e6e6e6"></div>
<div class="b" style="left:1481px;top:407.0px;width:315px;height:1.2px;background:#e6e6e6"></div>
<div class="b" style="left:1481px;top:454.9px;width:315px;height:1.2px;background:#e6e6e6"></div>
<div class="b" style="left:1481px;top:502.9px;width:315px;height:1.2px;background:#e6e6e6"></div>
<div class="b" style="left:1481px;top:550.8px;width:315px;height:1.2px;background:#e6e6e6"></div>
<div class="b" style="left:1481px;top:598.8px;width:315px;height:1.2px;background:#e6e6e6"></div>
<div class="b" style="left:1481px;top:646.7px;width:315px;height:1.2px;background:#e6e6e6"></div>
<div class="b" style="left:1481px;top:694.7px;width:315px;height:1.2px;background:#e6e6e6"></div>
<div class="b" style="left:1481px;top:742.6px;width:315px;height:1.2px;background:#e6e6e6"></div>
<div class="b" style="left:1481px;top:790.6px;width:315px;height:1.2px;background:#e6e6e6"></div>
<div class="b" style="left:1481px;top:838.5px;width:315px;height:1.2px;background:#e6e6e6"></div>
<span class="t" style="left:1460.22px;top:184.00px;font-size:17.6px;color:#111;transform:scaleX(1.0768);-webkit-text-stroke:0.35px currentColor;">NCM</span>
<span class="t" style="left:1488.90px;top:232.00px;font-size:17.6px;color:#222;transform:scaleX(0.9863);">Apply Credentials</span>
<span class="t" style="left:1487.56px;top:280.00px;font-size:17.6px;color:#222;transform:scaleX(0.9757);">Enable Change Detection</span>
<span class="t" style="left:1487.54px;top:328.00px;font-size:17.6px;color:#222;transform:scaleX(0.9874);">Backup</span>
<span class="t" style="left:1487.81px;top:376.00px;font-size:17.6px;color:#222;transform:scaleX(0.9868);">Upload Config</span>
<span class="t" style="left:1488.36px;top:424.00px;font-size:17.6px;color:#222;transform:scaleX(0.9839);">Sync Configuration</span>
<span class="t" style="left:1488.36px;top:472.00px;font-size:17.6px;color:#222;transform:scaleX(0.9773);">SNMP Credentials</span>
<span class="t" style="left:1487.55px;top:520.00px;font-size:17.6px;color:#222;transform:scaleX(0.9815);">Execute Configlet</span>
<span class="t" style="left:1487.53px;top:568.00px;font-size:17.6px;color:#222;transform:scaleX(0.9961);">Label Configuration</span>
<span class="t" style="left:1487.84px;top:616.00px;font-size:17.6px;color:#222;transform:scaleX(0.9673);">Update IP Address</span>
<span class="t" style="left:1487.55px;top:664.00px;font-size:17.6px;color:#222;transform:scaleX(0.9803);">Manage</span>
<span class="t" style="left:1487.84px;top:712.00px;font-size:17.6px;color:#222;transform:scaleX(0.9646);">Unmanage</span>
<span class="t" style="left:1487.52px;top:760.00px;font-size:17.6px;color:#222;transform:scaleX(1.0059);">Export Flow</span>
<span class="t" style="left:1487.82px;top:808.00px;font-size:17.6px;color:#222;transform:scaleX(0.9847);">Update Host Name</span>
</div></div>
</body></html>
